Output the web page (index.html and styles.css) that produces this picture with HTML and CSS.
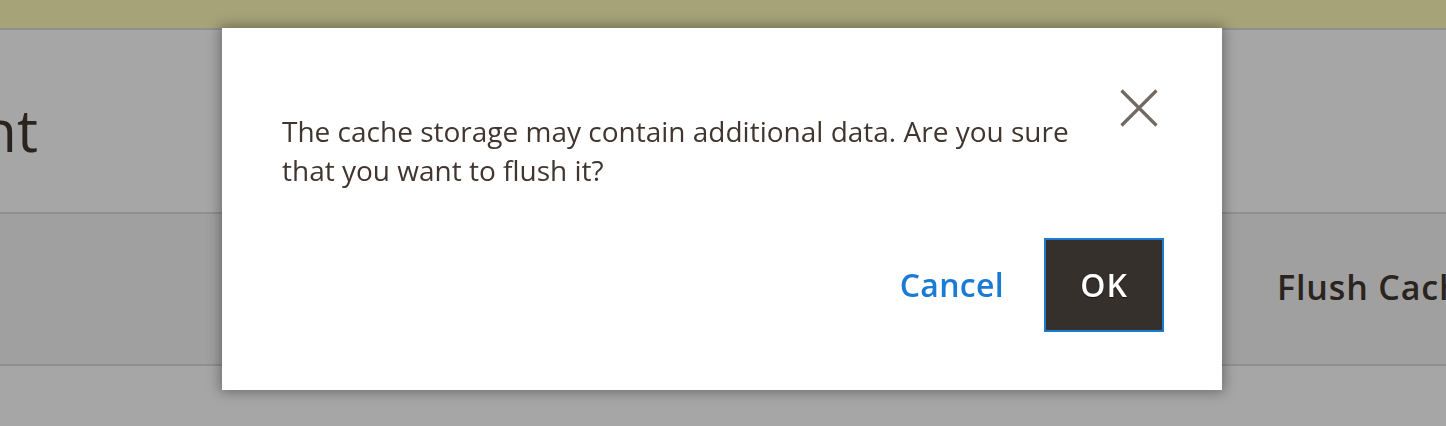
FILE: index.html
```html
<!DOCTYPE html>
<html lang="en">
<head>
<meta charset="utf-8">
<title>Cache Management</title>
<link rel="stylesheet" href="styles.css">
</head>
<body>
<div class="page">
  <div class="message-bar"></div>
  <header class="page-header">
    <div class="title-clip"><h1 class="page-title">Cache Management</h1></div>
  </header>
  <div class="page-actions">
    <button class="action-plain" type="button">Flush Cache Storage</button>
  </div>
</div>
<div class="overlay"></div>
<aside class="modal" role="dialog">
  <button class="modal-close" type="button" aria-label="Close">
    <svg width="38" height="38" viewBox="0 0 38 38" aria-hidden="true">
      <path d="M1.5 1.5 L36.5 36.5 M36.5 1.5 L1.5 36.5" stroke="#736963" stroke-width="3.2" fill="none"/>
    </svg>
  </button>
  <p class="modal-text">The cache storage may contain additional data. Are you sure that you want to flush it?</p>
  <footer class="modal-footer">
    <button class="btn-cancel" type="button">Cancel</button>
    <button class="btn-ok" type="button">OK</button>
  </footer>
</aside>
</body>
</html>
```
FILE: styles.css
```css
html, body {
  margin: 0;
  padding: 0;
  height: 100%;
  overflow: hidden;
  background: #ffffff;
  font-family: "Open Sans", "Noto Sans", sans-serif;
}

.page {
  display: flex;
  flex-direction: column;
}

.message-bar {
  height: 28px;
  background: #fffbbb;
}

.page-header {
  border-top: 2px solid #dcdcdc;
  height: 182px;
  box-sizing: content-box;
  display: flex;
  align-items: flex-start;
}

.title-clip {
  width: 38px;
  overflow: hidden;
  display: flex;
  justify-content: flex-end;
  padding-top: 67px;
}

.page-title {
  margin: 0;
  flex: none;
  white-space: nowrap;
  font-size: 59px;
  line-height: 64px;
  font-weight: 400;
  color: #41362f;
}

.page-actions {
  border-top: 2px solid #dcdcdc;
  border-bottom: 2px solid #dcdcdc;
  background: #f6f6f6;
  height: 150px;
  display: flex;
  align-items: center;
  padding-left: 1277px;
}

.action-plain {
  flex: none;
  border: 0;
  background: none;
  padding: 0;
  margin-bottom: 4px;
  text-align: left;
  font-family: inherit;
  font-size: 34px;
  font-weight: 600;
  letter-spacing: 0.025em;
  line-height: 46px;
  color: #41362f;
  white-space: nowrap;
}

.overlay {
  position: fixed;
  inset: 0;
  background: rgba(0, 0, 0, 0.35);
}

.modal {
  position: absolute;
  left: 222px;
  top: 28px;
  width: 1000px;
  height: 362px;
  box-sizing: border-box;
  background: #ffffff;
  box-shadow: 0 0 12px 2px rgba(0, 0, 0, 0.35);
  padding: 84px 58px 58px 60px;
  display: flex;
  flex-direction: column;
}

.modal-close {
  position: absolute;
  top: 61px;
  right: 64px;
  width: 38px;
  height: 38px;
  padding: 0;
  border: 0;
  background: none;
  display: flex;
}

.modal-text {
  margin: 0;
  max-width: 820px;
  font-size: 28px;
  line-height: 38.6px;
  color: #41362f;
}

.modal-footer {
  margin-top: auto;
  display: flex;
  justify-content: flex-end;
  align-items: center;
}

.btn-cancel {
  border: 0;
  background: none;
  padding: 0;
  margin-right: 40px;
  font-family: inherit;
  font-size: 32px;
  font-weight: 600;
  letter-spacing: 0.01em;
  line-height: 44px;
  color: #1a7bd4;
}

.btn-ok {
  width: 120px;
  height: 94px;
  box-sizing: border-box;
  border: 2px solid #1c7bd0;
  background: #35302c;
  color: #ffffff;
  font-family: inherit;
  font-size: 32px;
  font-weight: 600;
  letter-spacing: 0.03em;
  line-height: 44px;
  padding: 0;
  text-shadow: 0 1px 1px rgba(0, 0, 0, 0.6);
}
```
